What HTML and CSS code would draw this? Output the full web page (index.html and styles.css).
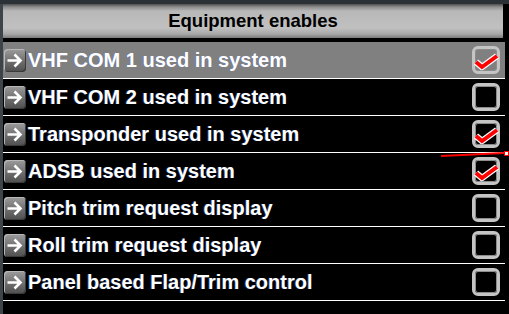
FILE: index.html
```html
<!DOCTYPE html>
<html lang="en">
<head>
    <meta charset="UTF-8">
    <title>Equipment enables</title>
    <link rel="stylesheet" href="styles.css">
</head>
<body>
    <div class="topbar"></div>
    <div class="main">
        <div class="side"></div>
        <div class="panel">
            <div class="header">Equipment enables</div>
            <ul class="list">
                <li class="row selected">
                    <span class="go"><svg width="22" height="23" viewBox="0 0 22 23"><path d="M3.5 11.5h13M10.5 5.5l6 6-6 6" fill="none" stroke="#fff" stroke-width="2.6"/></svg></span>
                    <span class="label">VHF COM 1 used in system</span>
                    <span class="box checked"><svg width="28" height="28" viewBox="0 0 28 28"><polyline points="4,16 10,21 25,10" fill="none" stroke="#fff" stroke-width="6.5" stroke-linejoin="round"/><polyline points="4,16 10,21 25,10" fill="none" stroke="#f00" stroke-width="4"/></svg></span>
                </li>
                <li class="row">
                    <span class="go"><svg width="22" height="23" viewBox="0 0 22 23"><path d="M3.5 11.5h13M10.5 5.5l6 6-6 6" fill="none" stroke="#fff" stroke-width="2.6"/></svg></span>
                    <span class="label">VHF COM 2 used in system</span>
                    <span class="box"></span>
                </li>
                <li class="row">
                    <span class="go"><svg width="22" height="23" viewBox="0 0 22 23"><path d="M3.5 11.5h13M10.5 5.5l6 6-6 6" fill="none" stroke="#fff" stroke-width="2.6"/></svg></span>
                    <span class="label">Transponder used in system</span>
                    <span class="box checked"><svg width="28" height="28" viewBox="0 0 28 28"><polyline points="4,16 10,21 25,10" fill="none" stroke="#fff" stroke-width="6.5" stroke-linejoin="round"/><polyline points="4,16 10,21 25,10" fill="none" stroke="#f00" stroke-width="4"/></svg></span>
                </li>
                <li class="row">
                    <span class="go"><svg width="22" height="23" viewBox="0 0 22 23"><path d="M3.5 11.5h13M10.5 5.5l6 6-6 6" fill="none" stroke="#fff" stroke-width="2.6"/></svg></span>
                    <span class="label">ADSB used in system</span>
                    <span class="box checked"><svg width="28" height="28" viewBox="0 0 28 28"><polyline points="4,16 10,21 25,10" fill="none" stroke="#fff" stroke-width="6.5" stroke-linejoin="round"/><polyline points="4,16 10,21 25,10" fill="none" stroke="#f00" stroke-width="4"/></svg></span>
                </li>
                <li class="row">
                    <span class="go"><svg width="22" height="23" viewBox="0 0 22 23"><path d="M3.5 11.5h13M10.5 5.5l6 6-6 6" fill="none" stroke="#fff" stroke-width="2.6"/></svg></span>
                    <span class="label">Pitch trim request display</span>
                    <span class="box"></span>
                </li>
                <li class="row">
                    <span class="go"><svg width="22" height="23" viewBox="0 0 22 23"><path d="M3.5 11.5h13M10.5 5.5l6 6-6 6" fill="none" stroke="#fff" stroke-width="2.6"/></svg></span>
                    <span class="label">Roll trim request display</span>
                    <span class="box"></span>
                </li>
                <li class="row">
                    <span class="go"><svg width="22" height="23" viewBox="0 0 22 23"><path d="M3.5 11.5h13M10.5 5.5l6 6-6 6" fill="none" stroke="#fff" stroke-width="2.6"/></svg></span>
                    <span class="label">Panel based Flap/Trim control</span>
                    <span class="box"></span>
                </li>
            </ul>
        </div>
        <!-- red pointer line drawn over the list -->
        <svg class="pointer" width="72" height="10" viewBox="0 0 72 10"><line x1="1" y1="7" x2="64" y2="4" stroke="#f00" stroke-width="2"/><rect x="64.5" y="2.5" width="4" height="4" fill="#fff" stroke="#f00" stroke-width="1"/></svg>
    </div>
</body>
</html>
```

FILE: styles.css
```css
body {
    margin: 0;
    width: 509px;
    height: 314px;
    overflow: hidden;
    background-color: #000;
    font-family: "Liberation Sans", Arial, sans-serif;
}
.topbar {
    height: 4px;
    background-color: #2b3237;
}
.main {
    display: flex;
    position: relative;
    height: 310px;
}
.side {
    width: 3px;
    background-color: #3e4549;
}
.panel {
    width: 502px;
}
.header {
    height: 34px;
    line-height: 34px;
    text-align: center;
    font-size: 18.5px;
    font-weight: bold;
    color: #000;
    border-right: 2px solid #000;
    border-bottom: 2px solid #000;
    background: linear-gradient(#4e4e4e 0, #8e8e8e 3px, #b8b8b8 7px, #c0c0c0 24px, #a8a8a8 30px, #7a7a7a 34px);
}
.list {
    list-style: none;
    margin: 2px 0 0 0;
    padding: 0;
}
.row {
    display: flex;
    align-items: center;
    height: 36px;
    border-bottom: 1px solid #fff;
    padding-right: 5px;
}
.row.selected {
    background-color: #808080;
}
.go {
    display: flex;
    width: 22px;
    height: 23px;
    margin-left: 1px;
    border-radius: 4px;
    background: linear-gradient(#9c9c9c, #6a6a6a 60%, #4e4e4e);
    box-shadow: inset 1px 1px 0 #b8b8b8, inset -1px -1px 0 #3a3a3a;
}
.label {
    flex: 1;
    margin-left: 2px;
    color: #fff;
    font-size: 20px;
    font-weight: bold;
    text-shadow: -1px 0 0 rgba(70, 110, 220, 0.45);
}
.box {
    position: relative;
    box-sizing: border-box;
    width: 28px;
    height: 28px;
    border: 3px solid #c4c4c4;
    border-radius: 6px;
    box-shadow: inset 0 0 0 1px #8c8c8c;
}
.box svg {
    position: absolute;
    left: -3px;
    top: -3px;
}
.pointer {
    position: absolute;
    left: 440px;
    top: 145px;
}
```
